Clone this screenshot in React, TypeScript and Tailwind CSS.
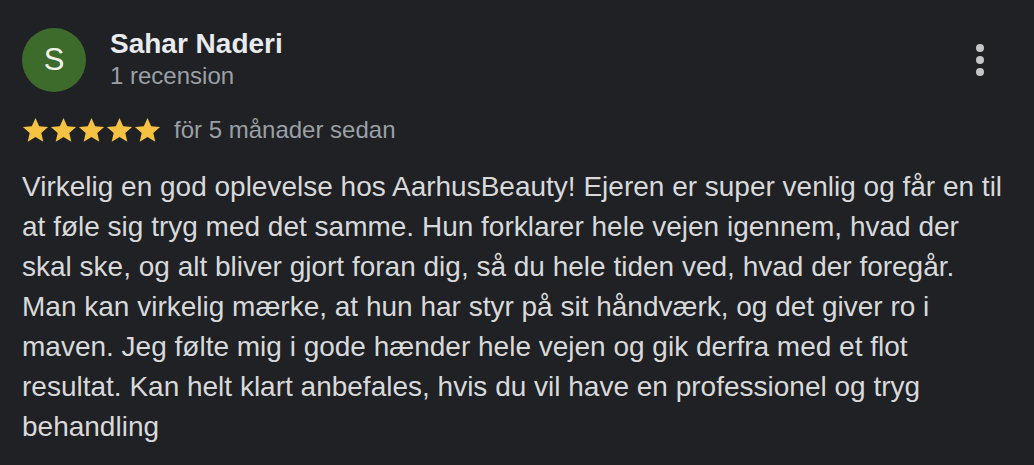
import React from "react";

function Star() {
  return (
    <svg width="27" height="27" viewBox="1.3 1.5 21.4 21.4" className="block">
      <path
        fill="#f6c244"
        d="M12 2.2l2.9 6.6 7.1.6-5.4 4.7 1.6 7-6.2-3.7-6.2 3.7 1.6-7L2 9.4l7.1-.6z"
      />
    </svg>
  );
}

export default function App() {
  const text =
    "Virkelig en god oplevelse hos AarhusBeauty! Ejeren er super venlig og får en til at føle sig tryg med det samme. Hun forklarer hele vejen igennem, hvad der skal ske, og alt bliver gjort foran dig, så du hele tiden ved, hvad der foregår. Man kan virkelig mærke, at hun har styr på sit håndværk, og det giver ro i maven. Jeg følte mig i gode hænder hele vejen og gik derfra med et flot resultat. Kan helt klart anbefales, hvis du vil have en professionel og tryg behandling";
  return (
    <div
      className="w-[1034px] h-[465px] bg-[#202124] overflow-hidden pl-[22px] pr-[24px] pt-[28px]"
      style={{ fontFamily: '"Liberation Sans", Arial, sans-serif' }}
    >
      <div className="flex items-start">
        <div className="w-[64px] h-[64px] rounded-full bg-[#3d6b2c] flex items-center justify-center text-[#eef2ea] text-[31px] shrink-0">
          S
        </div>
        <div className="ml-[24px] flex-1 -mt-[1px]">
          <div className="text-[28px] leading-[34px] font-bold text-[#e8eaed]">Sahar Naderi</div>
          <div className="text-[24px] leading-[30px] text-[#9aa0a6]">1 recension</div>
        </div>
        <div className="flex flex-col items-center gap-[4px] mt-[16px] mr-[26px]">
          <span className="w-[8px] h-[8px] rounded-full bg-[#c4c7c5]" />
          <span className="w-[8px] h-[8px] rounded-full bg-[#c4c7c5]" />
          <span className="w-[8px] h-[8px] rounded-full bg-[#c4c7c5]" />
        </div>
      </div>
      <div className="flex items-center mt-[23px] h-[30px]">
        <div className="flex gap-[1px]">
          <Star />
          <Star />
          <Star />
          <Star />
          <Star />
        </div>
        <span className="ml-[13px] text-[24px] leading-[30px] text-[#9aa0a6]">för 5 månader sedan</span>
      </div>
      <p className="mt-[22px] text-[28px] leading-[40px] text-[#d8d9db] w-[992px]">{text}</p>
    </div>
  );
}
